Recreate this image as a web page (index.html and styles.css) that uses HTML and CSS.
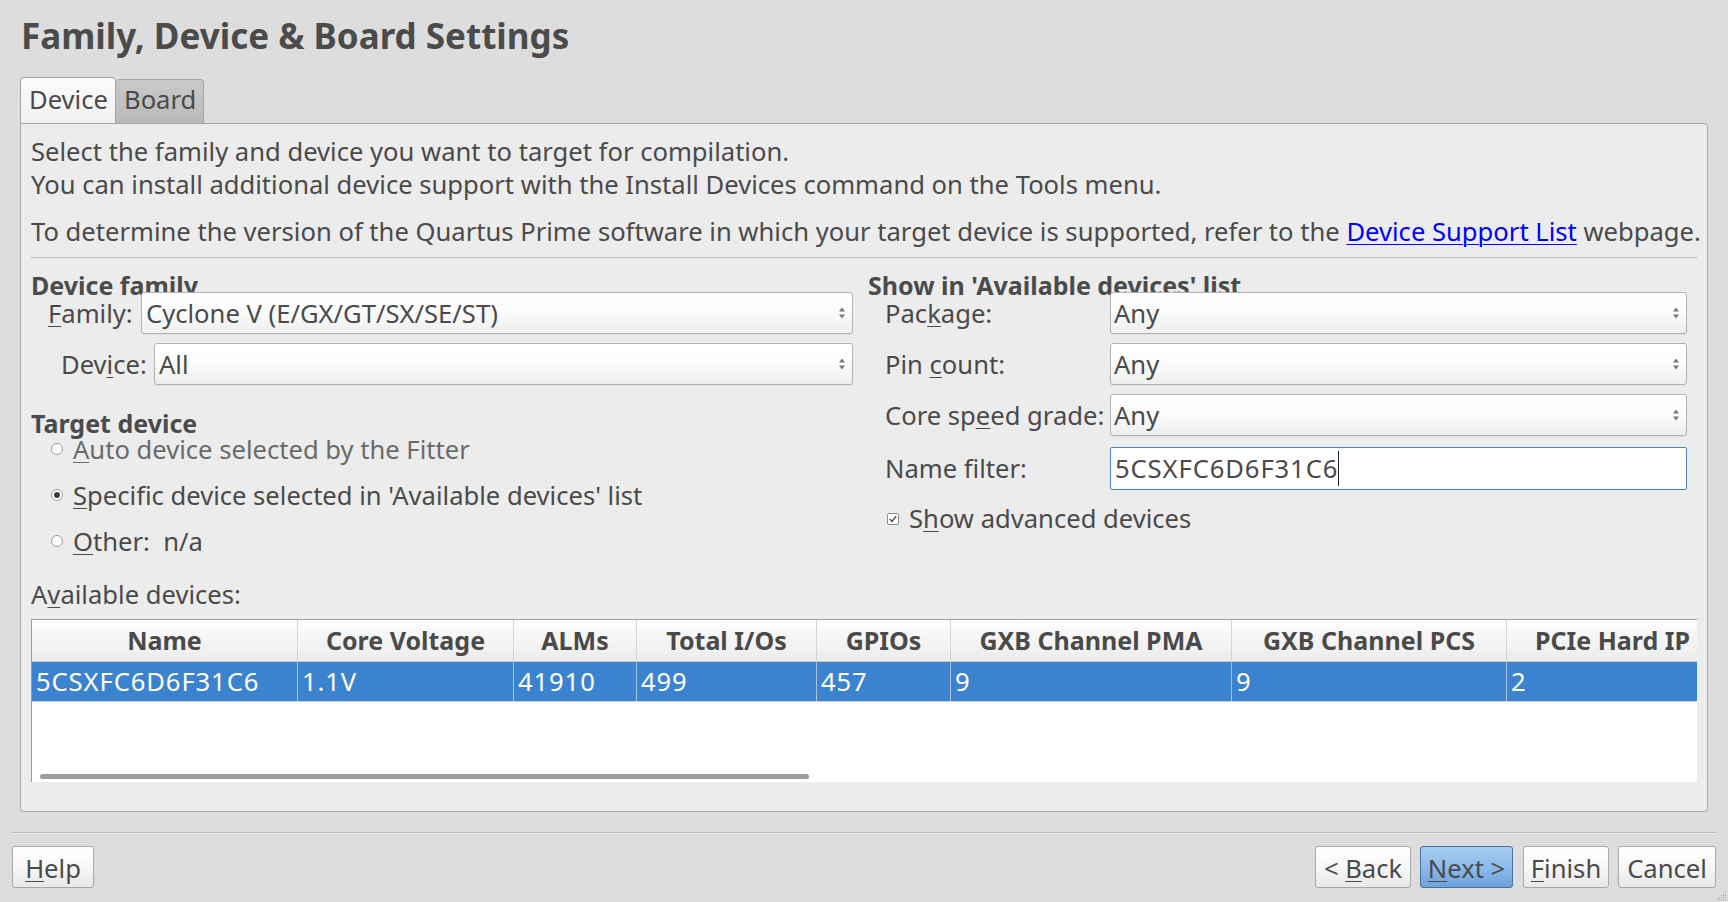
FILE: index.html
```html
<!DOCTYPE html>
<html lang="en">
<head>
<meta charset="utf-8">
<title>Family, Device &amp; Board Settings</title>
<link rel="stylesheet" href="styles.css">
</head>
<body>
<div class="wizard">
  <h1 class="title">Family, Device &amp; Board Settings</h1>

  <div class="tabbar">
    <div class="tab tab-active">Device</div>
    <div class="tab tab-inactive">Board</div>
  </div>

  <div class="pane">
    <div class="intro-line">Select the family and device you want to target for compilation.</div>
    <div class="intro-line">You can install additional device support with the Install Devices command on the Tools menu.</div>
    <div class="intro-line intro-gap">To determine the version of the Quartus Prime software in which your target device is supported, refer to the <a class="link" href="#">Device Support List</a> webpage.</div>
    <div class="hsep"></div>

    <div class="columns">
      <div class="col-left">
        <div class="group-title">Device family</div>
        <div class="form-row row-family">
          <span class="lbl"><u>F</u>amily:</span>
          <div class="combo">
            <span class="combo-text">Cyclone V (E/GX/GT/SX/SE/ST)</span>
            <svg class="spin" width="8" height="16" viewBox="0 0 8 16"><path d="M4 2.5 L7 6.5 H1 Z M1 9.5 H7 L4 13.5 Z"/></svg>
          </div>
        </div>
        <div class="form-row row-device">
          <span class="lbl">Dev<u>i</u>ce:</span>
          <div class="combo">
            <span class="combo-text">All</span>
            <svg class="spin" width="8" height="16" viewBox="0 0 8 16"><path d="M4 2.5 L7 6.5 H1 Z M1 9.5 H7 L4 13.5 Z"/></svg>
          </div>
        </div>

        <div class="group-title2">Target device</div>
        <div class="radio-row">
          <span class="radio"></span>
          <span class="radio-text dim"><u>A</u>uto device selected by the Fitter</span>
        </div>
        <div class="radio-row radio-gap">
          <span class="radio on"><span class="dot"></span></span>
          <span class="radio-text"><u>S</u>pecific device selected in 'Available devices' list</span>
        </div>
        <div class="radio-row radio-gap">
          <span class="radio"></span>
          <span class="radio-text"><u>O</u>ther:&nbsp; n/a</span>
        </div>
      </div>

      <div class="col-right">
        <div class="group-title">Show in 'Available devices' list</div>
        <div class="rrow">
          <span class="rlbl">Pac<u>k</u>age:</span>
          <div class="combo rcombo">
            <span class="combo-text">Any</span>
            <svg class="spin" width="8" height="16" viewBox="0 0 8 16"><path d="M4 2.5 L7 6.5 H1 Z M1 9.5 H7 L4 13.5 Z"/></svg>
          </div>
        </div>
        <div class="rrow rgap">
          <span class="rlbl">Pin <u>c</u>ount:</span>
          <div class="combo rcombo">
            <span class="combo-text">Any</span>
            <svg class="spin" width="8" height="16" viewBox="0 0 8 16"><path d="M4 2.5 L7 6.5 H1 Z M1 9.5 H7 L4 13.5 Z"/></svg>
          </div>
        </div>
        <div class="rrow rgap">
          <span class="rlbl">Core sp<u>e</u>ed grade:</span>
          <div class="combo rcombo">
            <span class="combo-text">Any</span>
            <svg class="spin" width="8" height="16" viewBox="0 0 8 16"><path d="M4 2.5 L7 6.5 H1 Z M1 9.5 H7 L4 13.5 Z"/></svg>
          </div>
        </div>
        <div class="rrow rrow-input">
          <span class="rlbl">Name filter:</span>
          <div class="input"><span class="input-text">5CSXFC6D6F31C6</span><span class="caret"></span></div>
        </div>
        <div class="check-row">
          <svg class="checkbox" width="12" height="12" viewBox="0 0 12 12"><rect x="0.5" y="0.5" width="11" height="11" rx="1.5" fill="#fff" stroke="#8a8a8a"/><path d="M2.8 6 L5 8.4 L9.2 3.2" fill="none" stroke="#3e3e3e" stroke-width="1.3"/></svg>
          <span class="check-text">S<u>h</u>ow advanced devices</span>
        </div>
      </div>
    </div>

    <div class="avail">A<u>v</u>ailable devices:</div>

    <div class="table">
      <div class="trow thead">
        <div class="th">Name</div>
        <div class="th">Core Voltage</div>
        <div class="th">ALMs</div>
        <div class="th">Total I/Os</div>
        <div class="th">GPIOs</div>
        <div class="th">GXB Channel PMA</div>
        <div class="th">GXB Channel PCS</div>
        <div class="th">PCIe Hard IP</div>
      </div>
      <div class="trow tsel">
        <div class="td">5CSXFC6D6F31C6</div>
        <div class="td">1.1V</div>
        <div class="td">41910</div>
        <div class="td">499</div>
        <div class="td">457</div>
        <div class="td">9</div>
        <div class="td">9</div>
        <div class="td">2</div>
      </div>
      <div class="hscroll"></div>
    </div>
  </div>

  <div class="bottom-sep"></div>

  <div class="btnbar">
    <button class="btn btn-help"><u>H</u>elp</button>
    <button class="btn btn-back">&lt; <u>B</u>ack</button>
    <button class="btn btn-next"><u>N</u>ext &gt;</button>
    <button class="btn btn-finish"><u>F</u>inish</button>
    <button class="btn btn-cancel">Cancel</button>
  </div>

  <svg class="grip" width="12" height="12" viewBox="0 0 12 12">
    <g fill="#a8a8a8">
      <rect x="10" y="2" width="1" height="1"/>
      <rect x="8" y="4" width="1" height="1"/><rect x="10" y="4" width="1" height="1"/>
      <rect x="6" y="6" width="1" height="1"/><rect x="8" y="6" width="1" height="1"/><rect x="10" y="6" width="1" height="1"/>
      <rect x="4" y="8" width="1" height="1"/><rect x="6" y="8" width="1" height="1"/><rect x="8" y="8" width="1" height="1"/><rect x="10" y="8" width="1" height="1"/>
      <rect x="2" y="10" width="1" height="1"/><rect x="4" y="10" width="1" height="1"/><rect x="6" y="10" width="1" height="1"/><rect x="8" y="10" width="1" height="1"/><rect x="10" y="10" width="1" height="1"/>
    </g>
  </svg>
</div>
</body>
</html>
```

FILE: styles.css
```css
* { box-sizing: border-box; }

html, body {
  margin: 0;
  padding: 0;
}

body {
  width: 1728px;
  height: 902px;
  overflow: hidden;
  background: #dddddd;
  font-family: "Noto Sans", "Open Sans", sans-serif;
  font-size: 25.6px;
  line-height: 33px;
  color: #4a4a4a;
}

.wizard {
  position: relative;
  width: 1728px;
  height: 902px;
}

u {
  text-decoration: underline;
  text-decoration-thickness: 1px;
  text-underline-offset: 3px;
}

.title {
  margin: 0;
  padding: 14px 0 0 21px;
  font-size: 35px;
  line-height: 44px;
  font-weight: 700;
  color: #4b4b4b;
}

/* Tabs */
.tabbar {
  display: flex;
  align-items: flex-end;
  height: 46px;
  margin: 19px 0 0 20px;
}

.tab {
  border: 1px solid #a4a4a4;
  border-bottom: none;
  border-radius: 4px 4px 0 0;
  line-height: 33px;
  padding-bottom: 7px;
  white-space: nowrap;
}

.tab-active {
  width: 96px;
  height: 46px;
  padding-top: 5px;
  padding-left: 8px;
  background: linear-gradient(#fbfbfb, #f0f0f0);
  color: #4a4a4a;
}

.tab-inactive {
  width: 88px;
  height: 44px;
  padding-top: 3px;
  padding-left: 8px;
  background: linear-gradient(#c9c9c9, #b9b9b9);
  color: #4a4a4a;
  border-left: none;
}

/* Pane */
.pane {
  height: 689px;
  margin: 0 20px;
  border: 1px solid #a6a6a6;
  border-radius: 0 4px 4px 4px;
  background: #ececec;
  padding: 11px 10px 0 10px;
}

.intro-line {
  white-space: nowrap;
  line-height: 33px;
}

.intro-gap {
  margin-top: 14px;
}

.link {
  color: #0000ff;
  text-decoration: underline;
  text-decoration-thickness: 1px;
  text-underline-offset: 3px;
}

.hsep {
  margin-top: 9px;
  height: 1px;
  background: #bcbcbc;
}

.columns {
  display: flex;
  margin-top: 12px;
}

.col-left {
  width: 822px;
  flex: none;
}

.col-right {
  width: 829px;
  flex: none;
  margin-left: 15px;
}

.group-title {
  height: 22px;
  font-size: 25px;
  line-height: 31px;
  font-weight: 700;
  color: #4b4b4b;
  white-space: nowrap;
}

.group-title2 {
  margin-top: 22px;
  height: 25px;
  font-size: 25px;
  line-height: 33px;
  font-weight: 700;
  color: #4b4b4b;
}

/* Form rows */
.form-row {
  display: flex;
  align-items: center;
  height: 42px;
}

.row-family { padding-left: 17px; }
.row-device { padding-left: 30px; margin-top: 9px; }

.lbl {
  width: 93px;
  flex: none;
  white-space: nowrap;
}

.combo {
  position: relative;
  flex: 1;
  height: 42px;
  display: flex;
  align-items: center;
  border: 1px solid #b2b2b2;
  border-radius: 3px;
  background: linear-gradient(#ffffff 0%, #fcfcfc 45%, #eeeeee 100%);
  padding: 0 6px 0 4px;
  box-shadow: 0 1px 0 rgba(0, 0, 0, 0.06);
}

.combo-text {
  flex: 1;
  white-space: nowrap;
  color: #4a4a4a;
}

.spin {
  flex: none;
  fill: #767676;
}

.rrow {
  display: flex;
  align-items: center;
  height: 42px;
  padding-left: 17px;
}

.rgap { margin-top: 9px; }

.rlbl {
  width: 225px;
  flex: none;
  white-space: nowrap;
}

.rcombo {
  flex: none;
  width: 577px;
  padding-left: 3px;
}

.rrow-input {
  margin-top: 11px;
  height: 43px;
}

.input {
  width: 577px;
  height: 43px;
  flex: none;
  display: flex;
  align-items: center;
  border: 1px solid #4a84c4;
  border-radius: 2px;
  background: #ffffff;
  padding-left: 4px;
  white-space: nowrap;
}

.input-text {
  letter-spacing: 0.9px;
}

.caret {
  display: inline-block;
  width: 1px;
  height: 35px;
  background: #222;
  margin-left: 0;
}

.check-row {
  display: flex;
  align-items: center;
  height: 33px;
  margin-top: 12px;
  padding-left: 19px;
}

.checkbox {
  flex: none;
  margin-right: 10px;
}

.check-text {
  white-space: nowrap;
}

/* Radios */
.radio-row {
  display: flex;
  align-items: center;
  height: 34px;
  padding-left: 20px;
}

.radio-gap { margin-top: 12px; }

.radio {
  width: 12px;
  height: 12px;
  flex: none;
  border: 1px solid #9a9a9a;
  border-radius: 50%;
  background: #ffffff;
  display: flex;
  align-items: center;
  justify-content: center;
  margin-right: 10px;
}

.radio .dot {
  width: 6px;
  height: 6px;
  border-radius: 50%;
  background: #3c3c3c;
}

.radio-text {
  white-space: nowrap;
}

.dim {
  color: #6a6a6a;
}

.avail {
  margin-top: 20px;
  line-height: 33px;
}

/* Table */
.table {
  position: relative;
  margin-top: 8px;
  height: 163px;
  background: #ffffff;
  border-top: 1px solid #9f9f9f;
  border-left: 1px solid #9f9f9f;
  overflow: hidden;
}

.trow {
  display: grid;
  grid-template-columns: 266px 216px 123px 180px 134px 281px 275px 212px;
  width: 1687px;
}

.thead {
  height: 42px;
  background: linear-gradient(#fdfdfd, #ececec);
  border-bottom: 1px solid #c6c6c6;
}

.th {
  border-right: 1px solid #d6d6d6;
  text-align: center;
  font-size: 25px;
  font-weight: 700;
  line-height: 41px;
  color: #4a4a4a;
  white-space: nowrap;
}

.tsel {
  height: 40px;
  background: #3c83cf;
  border-bottom: 1px solid #d2d2d2;
}

.td {
  border-right: 1px solid #a9c4e4;
  color: #ffffff;
  padding-left: 4px;
  line-height: 39px;
  white-space: nowrap;
  letter-spacing: 0.9px;
}

.hscroll {
  position: absolute;
  left: 8px;
  top: 154px;
  width: 769px;
  height: 5px;
  border-radius: 3px;
  background: #9c9c9c;
}

/* Bottom */
.bottom-sep {
  margin: 20px 11px 0;
  height: 2px;
  border-top: 1px solid #bdbdbd;
  border-bottom: 1px solid #ececec;
}

.btnbar {
  display: flex;
  margin-top: 12px;
  padding: 0 12px;
}

.btn {
  height: 42px;
  border: 1px solid #a8a8a8;
  border-radius: 3px;
  background: linear-gradient(#ffffff 0%, #f7f7f7 50%, #e8e8e8 100%);
  font-family: "Noto Sans", "Open Sans", sans-serif;
  font-size: 25.6px;
  line-height: 33px;
  color: #4a4a4a;
  padding: 2px 0 0 0;
  text-align: center;
  white-space: nowrap;
}

.btn-help { width: 82px; margin-right: auto; }
.btn-back { width: 96px; }
.btn-next {
  width: 93px;
  margin-left: 9px;
  border-color: #46729f;
  background: linear-gradient(#a9cdf3 0%, #8dbbea 50%, #6ea2dc 100%);
}
.btn-finish { width: 86px; margin-left: 10px; }
.btn-cancel { width: 98px; margin-left: 9px; }

.grip {
  position: absolute;
  right: 1px;
  bottom: 1px;
}
```
